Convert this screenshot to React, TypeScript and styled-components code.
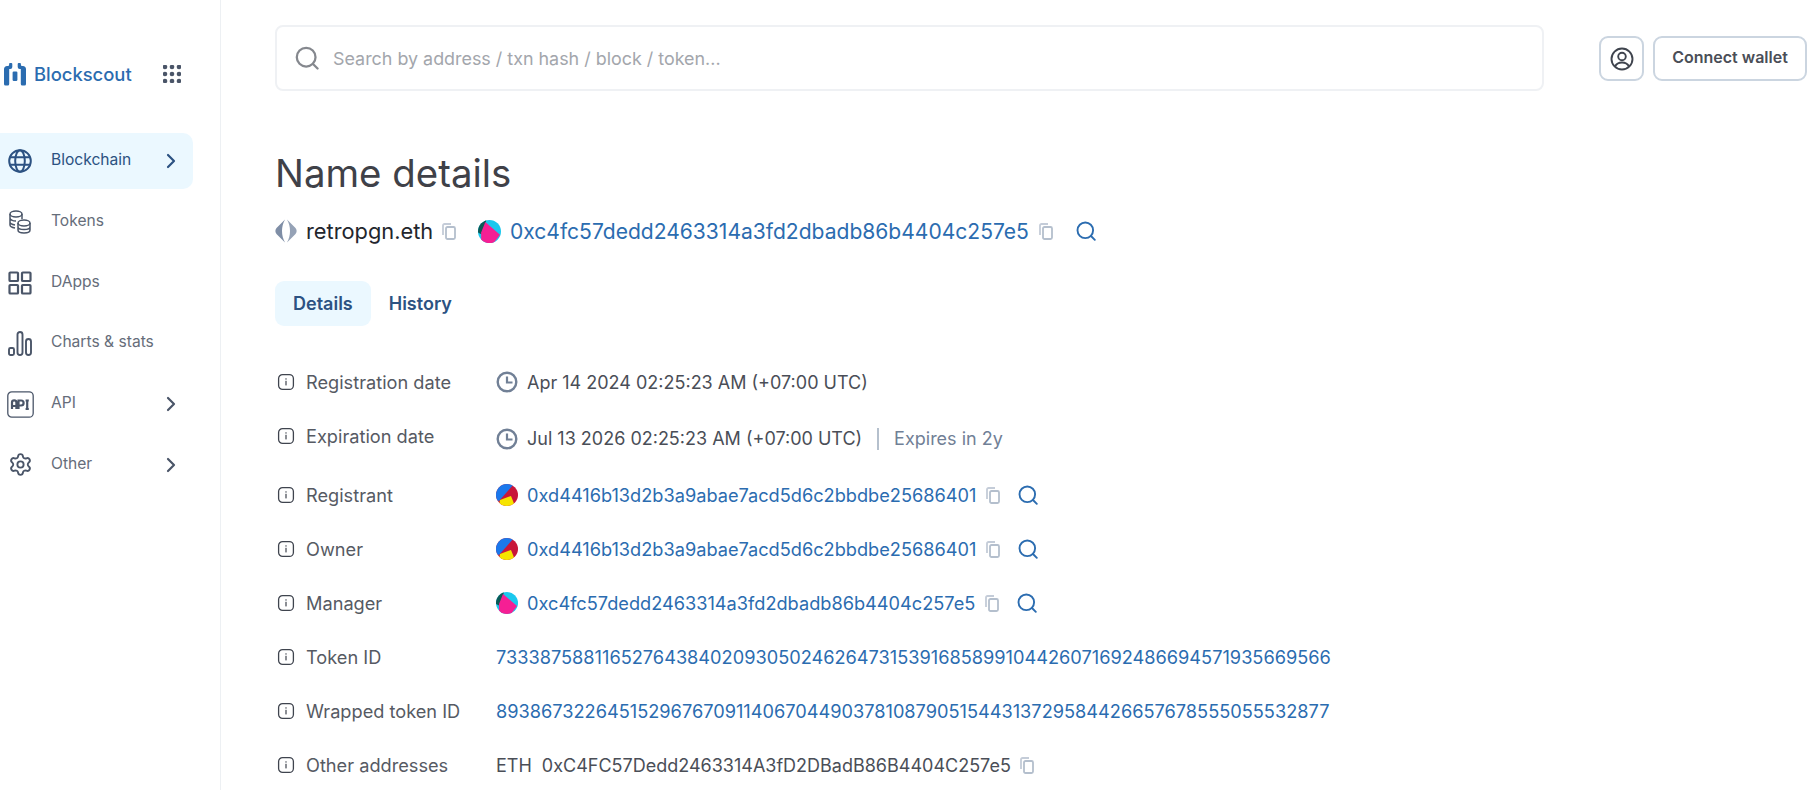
import React from "react";
import styled, { createGlobalStyle } from "styled-components";
import { ChevronRight, Settings } from "lucide-react";

const GlobalStyle = createGlobalStyle`
  html, body {
    margin: 0;
    height: 100%;
    overflow: hidden;
    background: #fff;
    font-family: Inter, "Liberation Sans", sans-serif;
    color: #4a4e57;
  }
  * { box-sizing: border-box; }
`;

const Page = styled.div`
  display: flex;
  width: 1813px;
  height: 790px;
  overflow: hidden;
`;

const Sidebar = styled.aside`
  flex: 0 0 221px;
  border-right: 1px solid #edf0f3;
  padding-top: 60px;
`;

const LogoRow = styled.div`
  display: flex;
  align-items: center;
  height: 28px;
  padding-left: 4px;
  margin-bottom: 45px;
`;

const LogoText = styled.span`
  margin-left: 8px;
  width: 129px;
  font-size: 18.4px;
  font-weight: 500;
  color: #2b6cb0;
`;

const NavList = styled.nav`
  display: flex;
  flex-direction: column;
  gap: 4.8px;
  width: 193px;
`;

const NavItem = styled.div<{ $active?: boolean }>`
  display: flex;
  align-items: center;
  height: 56px;
  padding-left: 8px;
  border-radius: 0 10px 10px 0;
  font-size: 15.6px;
  color: ${(p) => (p.$active ? "#2c5282" : "#666d7a")};
  background: ${(p) => (p.$active ? "#ebf8ff" : "transparent")};
`;

const NavIcon = styled.span<{ $active?: boolean }>`
  display: flex;
  align-items: center;
  justify-content: center;
  width: 24px;
  height: 24px;
  margin-right: 19px;
  color: ${(p) => (p.$active ? "#2c5282" : "#4a5568")};

  svg {
    flex: none;
  }
`;

const NavLabel = styled.span`
  flex: 1;
  margin-top: -3px;
`;

const NavChevron = styled(ChevronRight)<{ $active?: boolean }>`
  margin-right: 10px;
  color: ${(p) => (p.$active ? "#2c5282" : "#4a5568")};
`;

const Main = styled.main`
  flex: 1;
  padding: 25px 6px 0 54px;
  min-width: 0;
`;

const Header = styled.header`
  display: flex;
  align-items: center;
  height: 66px;
`;

const SearchBox = styled.div`
  display: flex;
  align-items: center;
  gap: 14px;
  flex: 0 0 1269px;
  height: 66px;
  padding-left: 18px;
  border: 2px solid #eff1f4;
  border-radius: 8px;
  font-size: 17.9px;
  color: #a3a6ac;
`;

const Actions = styled.div`
  display: flex;
  gap: 9px;
  margin-left: 55px;
  margin-top: 1px;
`;

const ProfileButton = styled.button`
  display: flex;
  align-items: center;
  justify-content: center;
  width: 45px;
  height: 45px;
  padding: 0;
  background: #fff;
  border: 2px solid #cbd5e0;
  border-radius: 9px;
  color: #3f444e;
`;

const ConnectButton = styled.button`
  width: 154px;
  height: 45px;
  padding: 0 0 3px;
  background: #fff;
  border: 2px solid #cbd5e0;
  border-radius: 9px;
  font-family: inherit;
  font-size: 16px;
  font-weight: 600;
  color: #4a4e57;
`;

const Title = styled.h1`
  margin: 58px 0 0;
  font-size: 38.4px;
  line-height: 48px;
  font-weight: 400;
  color: #3f4148;
`;

const SubHeader = styled.div`
  display: flex;
  align-items: center;
  height: 28px;
  margin-top: 20px;
  font-size: 21.05px;
`;

const EnsName = styled.span`
  width: 127px;
  margin: 0 9px 0 9px;
  font-size: 21.8px;
  white-space: nowrap;
  color: #23262d;
`;

const HeaderAddress = styled.a`
  margin: 0 10px 0 9px;
  color: #2b6cb0;
`;

const Gap = styled.span<{ $w: number }>`
  flex: none;
  width: ${(p) => p.$w}px;
`;

const Tabs = styled.div`
  display: flex;
  margin-top: 36px;
`;

const Tab = styled.div<{ $active?: boolean }>`
  display: flex;
  align-items: center;
  justify-content: center;
  height: 45px;
  padding: 0 18px;
  border-radius: 9px;
  font-size: 18px;
  font-weight: 600;
  color: #2c5282;
  background: ${(p) => (p.$active ? "#ebf8ff" : "transparent")};
`;

const DetailsGrid = styled.div`
  display: grid;
  grid-template-columns: 221px 1fr;
  grid-auto-rows: auto;
  margin-top: 29px;
  font-size: 18.2px;
`;

const LabelCell = styled.div`
  display: flex;
  align-items: center;
  height: 54px;
  padding-left: 2px;
  color: #565a63;
`;

const LabelText = styled.span`
  margin-left: 11px;
`;

const ValueCell = styled.div<{ $tall?: boolean }>`
  display: flex;
  align-items: center;
  height: ${(p) => (p.$tall ? "59px" : "54px")};
`;

const DateText = styled.span`
  font-size: 18px;
`;

const Muted = styled(DateText)`
  color: #718096;
`;

const Divider = styled.span`
  width: 2px;
  height: 22px;
  margin: 0 15px;
  background: #b5c0cd;
`;

const ValueLink = styled.a`
  color: #2b6cb0;
`;

const AddressLink = styled(ValueLink)`
  margin: 0 10px 0 9px;
`;

const PlainAddress = styled(DateText)`
  margin: 0 9px 0 10px;
`;

const Identicon = styled.span<{ $size: number }>`
  display: inline-flex;
  flex: none;
  width: ${(p) => p.$size}px;
  height: ${(p) => p.$size}px;
  border-radius: 50%;
  overflow: hidden;
`;

const ClockMark = styled.svg`
  flex: none;
  margin: 0 9px 0 0;
`;

const CopyMark = styled.svg`
  flex: none;
`;

const LensMark = styled.svg`
  flex: none;
`;

const InfoIcon = () => (
  <svg width="18" height="18" viewBox="0 0 18 18" fill="none">
    <rect x="1.600" y="1.600" width="14.800" height="14.800" rx="4" stroke="#3f444e" strokeWidth="1.300" />
    <rect x="8.400" y="7.800" width="1.200" height="4.600" fill="#3f444e" />
    <rect x="8.400" y="5.300" width="1.200" height="1.300" fill="#3f444e" />
  </svg>
);

const Clock = () => (
  <ClockMark width="22" height="22" viewBox="0 0 22 22" fill="none">
    <circle cx="11" cy="11" r="9.300" stroke="#718096" strokeWidth="2.400" />
    <path d="M11 5.500V11.500H16.500" stroke="#718096" strokeWidth="2.200" />
  </ClockMark>
);

const CopyIcon = () => (
  <CopyMark width="14" height="17" viewBox="0 0 14 17" fill="none">
    <path d="M1 12V2.500A1.500 1.500 0 0 1 2.500 1H9" stroke="#c4ccd8" strokeWidth="1.800" />
    <rect x="4" y="4" width="9" height="12" rx="1.500" stroke="#b4bfcd" strokeWidth="1.800" />
  </CopyMark>
);

const LensIcon = ({ size, color }: { size: number; color: string }) => (
  <LensMark width={size} height={size} viewBox="0 0 20 20" fill="none" stroke={color} strokeWidth="1.900">
    <circle cx="9.300" cy="9.300" r="7.800" />
    <path d="M15 15L18.800 18.800" strokeLinecap="round" />
  </LensMark>
);

const PinkAvatar = ({ size }: { size: number }) => (
  <Identicon $size={size}>
    <svg width={size} height={size} viewBox="0 0 22 22">
      <rect width="22" height="22" fill="#1ac8ee" />
      <path d="M0 0H8L4 14L0 12Z" fill="#0b5a56" />
      <path d="M7 2L21 14L15 22H3L3 12Z" fill="#f51f94" />
    </svg>
  </Identicon>
);

const RedAvatar = ({ size }: { size: number }) => (
  <Identicon $size={size}>
    <svg width={size} height={size} viewBox="0 0 22 22">
      <rect width="22" height="22" fill="#c8163a" />
      <path d="M0 0H18L3 17L0 16Z" fill="#1a78ec" />
      <path d="M4 16L15 12L19 22H3Z" fill="#f6e400" />
    </svg>
  </Identicon>
);

const LogoMark = () => (
  <svg width="22" height="23" viewBox="0 0 22 23" fill="#2b6cb0">
    <path d="M3.500 3h.8a1 1 0 0 0 .8-.9V.9A.9.9 0 0 1 6 0h1.300a1 1 0 0 1 1 1v3a2 2 0 0 1-2 2H5.200v15a1.500 1.500 0 0 1-1.500 1.500H1.500A1.500 1.500 0 0 1 0 21V6a3 3 0 0 1 3.500-3z" />
    <path d="M18.500 3h-.8a1 1 0 0 1-.8-.9V.9A.9.9 0 0 0 16 0h-1.300a1 1 0 0 0-1 1v3a2 2 0 0 0 2 2h1.100v15a1.500 1.500 0 0 0 1.500 1.500h2.200A1.500 1.500 0 0 0 22 21V6a3 3 0 0 0-3.500-3z" />
    <rect x="8.600" y="8.500" width="4.800" height="9.500" rx="1.200" />
  </svg>
);

const Dots = () => (
  <svg width="18" height="18" viewBox="0 0 18 18" fill="#4a5568">
    {[2, 9, 16].flatMap((y) =>
      [2, 9, 16].map((x) => <circle key={`${x}-${y}`} cx={x} cy={y} r="2.300" />),
    )}
  </svg>
);

const GlobeIcon = () => (
  <svg width="24" height="24" viewBox="0 0 24 24" fill="none" stroke="#2c5282" strokeWidth="2">
    <circle cx="12" cy="12" r="10.800" />
    <ellipse cx="12" cy="12" rx="4.800" ry="10.800" />
    <path d="M2.200 8.300H21.800M2.200 15.700H21.800" />
  </svg>
);

const CoinsIcon = () => (
  <svg width="24" height="24" viewBox="0 0 24 24" fill="none" stroke="#4a5568" strokeWidth="1.500">
    <ellipse cx="8" cy="4" rx="6" ry="3" />
    <path d="M2 4V15C2 16.500 4 17.500 7 18M2 8C2 9.500 4.500 11 8 11M2 12C2 13.500 4 14.500 7 15M14 4V9" />
    <ellipse cx="16" cy="13" rx="6" ry="3" />
    <path d="M10 13V20C10 22 13 23 16 23S22 22 22 20V13M10 17C10 18.500 13 19.500 16 19.500S22 18.500 22 17" />
  </svg>
);

const TilesIcon = () => (
  <svg width="24" height="24" viewBox="0 0 24 24" fill="none" stroke="#4a5568" strokeWidth="2.200">
    <rect x="1.500" y="1.500" width="8.500" height="8.500" rx="0.800" />
    <rect x="14" y="1.500" width="8.500" height="8.500" rx="0.800" />
    <rect x="1.500" y="14" width="8.500" height="8.500" rx="0.800" />
    <rect x="14" y="14" width="8.500" height="8.500" rx="0.800" />
  </svg>
);

const BarsIcon = () => (
  <svg width="24" height="25" viewBox="0 0 24 25" fill="none" stroke="#4a5568" strokeWidth="1.900">
    <rect x="1" y="17" width="5" height="7" rx="1.500" />
    <rect x="9.500" y="1" width="5" height="23" rx="2.500" />
    <rect x="18" y="8" width="5" height="16" rx="2.500" />
  </svg>
);

const ApiIcon = () => (
  <svg width="27" height="27" viewBox="0 0 27 27" fill="none">
    <rect x="0.800" y="0.800" width="25.400" height="25.400" rx="4" stroke="#4a5568" strokeWidth="1.300" />
    <path d="M5 18V11.500a2.200 2.200 0 0 1 4.400 0V18M5 15h4.400M11.500 18V9.500h2.600a2.400 2.400 0 0 1 0 5h-2.600M18.600 9.500h3.200M20.200 9.500V18M18.600 18h3.200" stroke="#4a5568" strokeWidth="2.200" />
  </svg>
);

const EnsIcon = () => (
  <svg width="22" height="24" viewBox="0 0 22 24">
    <path d="M10 .5L1.500 9C0 11 0 13 1.500 15L10 23.500C8 20 7 16 7 12S8 4 10 .5Z" fill="#7f8ea6" />
    <path d="M12 .5L20.500 9C22 11 22 13 20.500 15L12 23.500C14 20 15 16 15 12S14 4 12 .5Z" fill="#95a2b6" />
  </svg>
);

const UserIcon = () => (
  <svg width="24" height="24" viewBox="0 0 24 24" fill="none" stroke="#3f444e" strokeWidth="1.900">
    <circle cx="12" cy="12" r="10.500" />
    <circle cx="12" cy="9.500" r="3.800" />
    <path d="M5 19.500C6.500 16.500 9 15.500 12 15.500S17.500 16.500 19 19.500" />
  </svg>
);

const navItems = [
  { label: "Blockchain", icon: <GlobeIcon />, chevron: true, active: true },
  { label: "Tokens", icon: <CoinsIcon /> },
  { label: "DApps", icon: <TilesIcon /> },
  { label: "Charts & stats", icon: <BarsIcon /> },
  { label: "API", icon: <ApiIcon />, chevron: true },
  { label: "Other", icon: <Settings size={25} strokeWidth={1.8} />, chevron: true },
];

const Label = ({ children }: { children: string }) => (
  <LabelCell>
    <InfoIcon />
    <LabelText>{children}</LabelText>
  </LabelCell>
);

const Address = ({ hash, pink }: { hash: string; pink?: boolean }) => (
  <ValueCell>
    {pink ? <PinkAvatar size={22} /> : <RedAvatar size={22} />}
    <AddressLink>{hash}</AddressLink>
    <CopyIcon />
    <Gap $w={18} />
    <LensIcon size={20} color="#2b6cb0" />
  </ValueCell>
);

export default function App() {
  return (
    <Page>
      <GlobalStyle />
      <Sidebar>
        <LogoRow>
          <LogoMark />
          <LogoText>Blockscout</LogoText>
          <Dots />
        </LogoRow>
        <NavList>
          {navItems.map((item) => (
            <NavItem key={item.label} $active={item.active}>
              <NavIcon $active={item.active}>{item.icon}</NavIcon>
              <NavLabel>{item.label}</NavLabel>
              {item.chevron && <NavChevron size={24} strokeWidth={2.2} $active={item.active} />}
            </NavItem>
          ))}
        </NavList>
      </Sidebar>
      <Main>
        <Header>
          <SearchBox>
            <LensIcon size={24} color="#85888e" />
            Search by address / txn hash / block / token...
          </SearchBox>
          <Actions>
            <ProfileButton>
              <UserIcon />
            </ProfileButton>
            <ConnectButton>Connect wallet</ConnectButton>
          </Actions>
        </Header>

        <Title>Name details</Title>
        <SubHeader>
          <EnsIcon />
          <EnsName>retropgn.eth</EnsName>
          <CopyIcon />
          <Gap $w={22} />
          <PinkAvatar size={23} />
          <HeaderAddress>0xc4fc57dedd2463314a3fd2dbadb86b4404c257e5</HeaderAddress>
          <CopyIcon />
          <Gap $w={23} />
          <LensIcon size={20} color="#2b6cb0" />
        </SubHeader>

        <Tabs>
          <Tab $active>Details</Tab>
          <Tab>History</Tab>
        </Tabs>

        <DetailsGrid>
          <Label>Registration date</Label>
          <ValueCell>
            <Clock />
            <DateText>Apr 14 2024 02:25:23 AM (+07:00 UTC)</DateText>
          </ValueCell>

          <Label>Expiration date</Label>
          <ValueCell $tall>
            <Clock />
            <DateText>Jul 13 2026 02:25:23 AM (+07:00 UTC)</DateText>
            <Divider />
            <Muted>Expires in 2y</Muted>
          </ValueCell>

          <Label>Registrant</Label>
          <Address hash="0xd4416b13d2b3a9abae7acd5d6c2bbdbe25686401" />

          <Label>Owner</Label>
          <Address hash="0xd4416b13d2b3a9abae7acd5d6c2bbdbe25686401" />

          <Label>Manager</Label>
          <Address hash="0xc4fc57dedd2463314a3fd2dbadb86b4404c257e5" pink />

          <Label>Token ID</Label>
          <ValueCell>
            <ValueLink>73338758811652764384020930502462647315391685899104426071692486694571935669566</ValueLink>
          </ValueCell>

          <Label>Wrapped token ID</Label>
          <ValueCell>
            <ValueLink>89386732264515296767091140670449037810879051544313729584426657678555055532877</ValueLink>
          </ValueCell>

          <Label>Other addresses</Label>
          <ValueCell>
            <DateText>ETH</DateText>
            <PlainAddress>0xC4FC57Dedd2463314A3fD2DBadB86B4404C257e5</PlainAddress>
            <CopyIcon />
          </ValueCell>
        </DetailsGrid>
      </Main>
    </Page>
  );
}
